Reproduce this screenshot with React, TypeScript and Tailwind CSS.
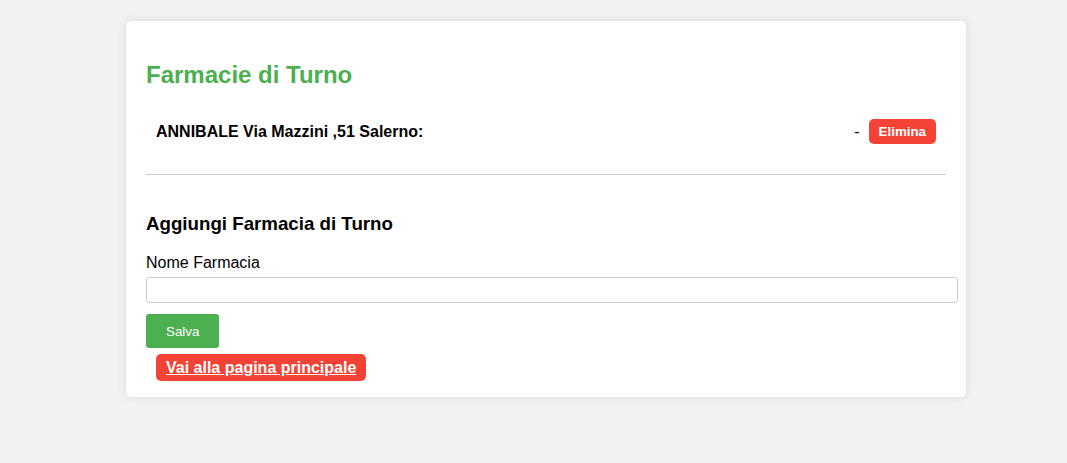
export default function App() {
  return (
    <div className="min-h-[463px] bg-[#f2f2f2] pt-[21px] font-['Liberation_Sans',Arial,sans-serif] text-black">
      <div className="ml-[126px] w-[840px] rounded-[5px] bg-white px-5 pt-5 pb-4 shadow-[0_0_10px_rgba(0,0,0,0.1)]">
        <h2 className="mt-5 mb-5 text-[24px] leading-[28px] font-bold text-[#4caf50]">Farmacie di Turno</h2>

        <ul>
          <li className="flex items-center justify-between p-[10px]">
            <span className="text-[16px] font-bold">ANNIBALE Via Mazzini ,51 Salerno:</span>
            <div className="flex items-center">
              <span className="mr-[9px] text-[16px]">-</span>
              <button className="rounded-[5px] bg-[#f44336] px-[10px] py-[5px] text-[13.33px] leading-[15px] font-bold text-white">
                Elimina
              </button>
            </div>
          </li>
        </ul>

        <hr className="mt-5 border-0 border-t border-[#ccc]" />

        <div className="mt-[38px]">
          <h3 className="text-[18.72px] leading-[22px] font-bold">Aggiungi Farmacia di Turno</h3>
          <label className="mt-[19px] block text-[16px] leading-[18px]">Nome Farmacia</label>
          <input
            type="text"
            className="mt-[5px] block h-[26px] w-[812px] rounded-[3px] border border-[#ccc] bg-white px-[5px]"
          />
          <button className="mt-[11px] block h-[34px] rounded-[3px] bg-[#4caf50] px-5 text-[13.33px] leading-[15px] text-white">
            Salva
          </button>
          <a
            href="#"
            className="mt-[6px] ml-[10px] block w-fit rounded-[5px] bg-[#f44336] px-[10px] py-[4px] text-[16px] leading-[19px] font-bold text-white underline"
          >
            Vai alla pagina principale
          </a>
        </div>
      </div>
    </div>
  );
}
